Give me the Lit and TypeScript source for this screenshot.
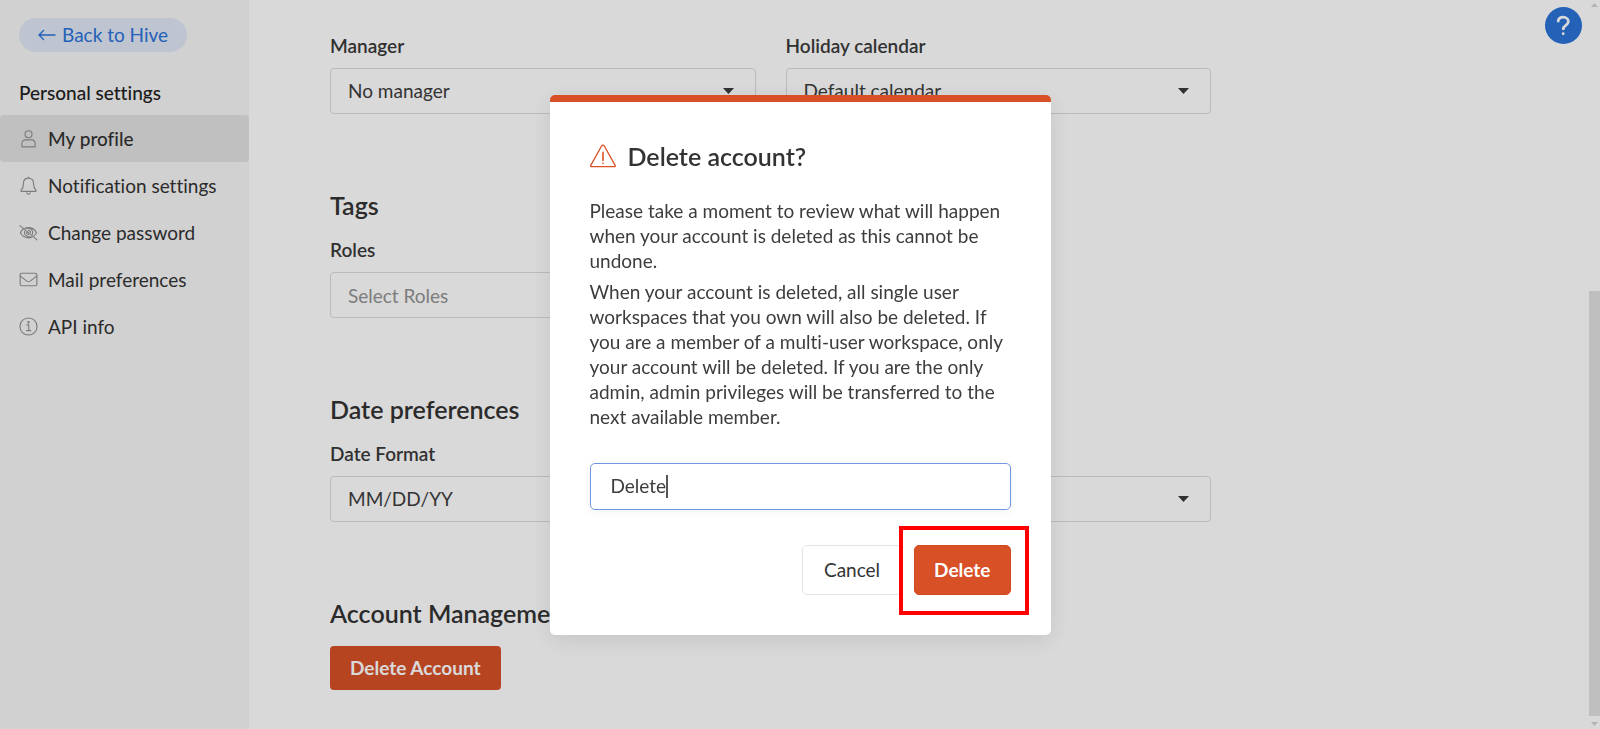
import { LitElement, html, css, svg } from "lit";
import { customElement, property } from "lit/decorators.js";
import { classMap } from "lit/directives/class-map.js";

const navIcons: Record<string, unknown> = {
  user: svg`<circle cx="10" cy="5.500" r="3.700"/><path d="M3 18.300v-2.500c0-2.600 1.400-4.300 3.600-4.300h6.800c2.200 0 3.600 1.700 3.600 4.300v2.500c0 .3-.2.500-.5.500h-13c-.3 0-.5-.2-.5-.5z"/>`,
  bell: svg`<path d="M10 1v1.300M10 2.300c-3.400 0-5.300 2.400-5.300 5.500 0 4.300-1 5.600-2.500 7-.5.500-.2 1.400.5 1.400h14.600c.7 0 1-.9.500-1.400-1.500-1.400-2.500-2.700-2.500-7 0-3.100-1.900-5.500-5.300-5.500zM8.200 17.800c.3.900 1 1.300 1.800 1.300s1.500-.4 1.800-1.300"/>`,
  eye: svg`<path d="M1 2.700l18 15M6.200 5.500C7.400 5 8.700 4.800 10 4.800c3.600 0 6.700 2 8.500 5.400-.6 1.200-1.500 2.200-2.600 3.100M4.300 6.600C3.100 7.500 2.200 8.700 1.500 10.200c1.800 3.400 4.900 5.400 8.500 5.400 1.300 0 2.500-.3 3.600-.7M8 5.900c2.800-1.400 6.400.6 6.400 4.200 0 .6-.1 1.200-.4 1.800M5.800 8.700c-.7 3.500 2.200 6.400 5.700 5.700M9.800 7.800c1.300 0 2.300.9 2.300 2.100M8 9.900c0 1.100.9 2 2 2.100"/>`,
  mail: svg`<rect x="1.200" y="3.400" width="17.600" height="13.200" rx="1.500"/><path d="M1.200 6.200l7 5.500c1.200.9 2.400.9 3.600 0l7-5.500"/>`,
  info: svg`<circle cx="10" cy="10" r="9"/><path d="M8.300 8.300h2v5.900M8 14.400h4.400"/><circle cx="10" cy="5.600" r=".7" fill="currentColor"/>`,
};

@customElement("settings-sidebar")
class SettingsSidebar extends LitElement {
  static styles = css`
    :host {
      display: block;
      background: #f6f6f6;
      padding-top: 18px;
      color: #333;
    }
    .back {
      display: inline-flex;
      align-items: center;
      gap: 6px;
      height: 34px;
      padding: 0 19px;
      margin-left: 19px;
      border-radius: 17px;
      background: #e0e8f5;
      color: #2a72da;
      text-decoration: none;
    }
    .back svg {
      width: 18px;
      height: 12px;
    }
    .title {
      margin: 28px 0 10px 19px;
      font-size: 19px;
      line-height: 25px;
      font-weight: 500;
      color: #222;
    }
    .items {
      list-style: none;
      margin: 0;
      padding: 0;
    }
    .item {
      display: flex;
      align-items: center;
      gap: 10px;
      height: 47px;
      padding-left: 19px;
      border-radius: 4px;
      color: inherit;
      text-decoration: none;
    }
    .item svg {
      width: 19px;
      height: 19px;
      color: #929292;
    }
    .active {
      background: #e2e2e2;
      font-weight: 500;
    }
  `;

  private items = [
    { icon: "user", label: "My profile", active: true },
    { icon: "bell", label: "Notification settings", active: false },
    { icon: "eye", label: "Change password", active: false },
    { icon: "mail", label: "Mail preferences", active: false },
    { icon: "info", label: "API info", active: false },
  ];

  render() {
    return html`
      <a class="back" href="#">
        <svg viewBox="0 0 18 12" fill="none" stroke="currentColor" stroke-width="1.400" stroke-linecap="round" stroke-linejoin="round" aria-hidden="true">
          <path d="M17 6H1M5.500 1.500L1 6l4.500 4.500" />
        </svg>
        Back to Hive
      </a>
      <h2 class="title">Personal settings</h2>
      <ul class="items">
        ${this.items.map(
          (item) => html`<li>
            <a href="#" class=${classMap({ item: true, active: item.active })}>
              <svg viewBox="0 0 20 20" fill="none" stroke="currentColor" stroke-width="1.200" stroke-linecap="round" stroke-linejoin="round" aria-hidden="true">${navIcons[item.icon]}</svg>
              ${item.label}
            </a>
          </li>`
        )}
      </ul>
    `;
  }
}

@customElement("form-field")
class FormField extends LitElement {
  static styles = css`
    :host {
      display: flex;
      flex-direction: column;
      gap: 10px;
    }
    label {
      line-height: 24px;
      font-weight: 600;
      color: #3a3a3a;
    }
    .box {
      display: grid;
      align-items: center;
      height: 46px;
      box-sizing: border-box;
      border: 1px solid #dcdcdc;
      border-radius: 4px;
    }
    .control {
      grid-area: 1 / 1;
      appearance: none;
      width: 100%;
      height: 100%;
      box-sizing: border-box;
      padding: 0 17px;
      border: 0;
      outline: 0;
      background: transparent;
      font: inherit;
      color: #3d3d3d;
    }
    .control::placeholder {
      color: #939393;
      opacity: 1;
    }
    .arrow {
      grid-area: 1 / 1;
      justify-self: end;
      margin-right: 21px;
      width: 11px;
      height: 6px;
      fill: #3a3a3a;
      pointer-events: none;
    }
  `;

  @property() label = "";
  @property() value = "";
  @property() placeholder = "";

  render() {
    return html`
      <label for="control">${this.label}</label>
      <div class="box">
        ${this.placeholder
          ? html`<input id="control" class="control" type="text" placeholder=${this.placeholder} />`
          : html`<select id="control" class="control">
                <option>${this.value}</option>
              </select>
              <svg class="arrow" viewBox="0 0 11 6" aria-hidden="true"><path d="M0 0h11L5.500 6z" /></svg>`}
      </div>
    `;
  }
}

@customElement("delete-dialog")
class DeleteDialog extends LitElement {
  static styles = css`
    :host {
      position: fixed;
      inset: 0;
      display: flex;
      align-items: center;
      justify-content: center;
      background: rgba(0, 0, 0, 0.15);
      color: #333;
    }
    .dialog {
      box-sizing: border-box;
      width: 501px;
      max-width: 100%;
      padding: 42px 40px 40px;
      border-top: 7px solid #d85026;
      border-radius: 5px;
      background: #fff;
      box-shadow: 0 5px 24px rgba(0, 0, 0, 0.1);
    }
    .heading {
      display: flex;
      align-items: center;
      gap: 12px;
      margin: 0 0 30px;
      font-size: 25px;
      line-height: 24px;
      font-weight: 600;
    }
    .heading svg {
      width: 26px;
      height: 24px;
    }
    p {
      margin: 0 0 6px;
      line-height: 25px;
      color: #3d3d3d;
    }
    .confirm {
      display: flex;
      align-items: center;
      height: 47px;
      box-sizing: border-box;
      margin: 34px 0 35px;
      padding: 0 20px;
      border: 1px solid #6f96e0;
      border-radius: 5px;
      box-shadow: 0 2px 8px rgba(0, 0, 0, 0.06);
    }
    .confirm input {
      field-sizing: content;
      padding: 0;
      border: 0;
      outline: 0;
      background: transparent;
      font: inherit;
      color: #3d3d3d;
    }
    .caret {
      width: 2px;
      height: 23px;
      background: #555;
    }
    .actions {
      display: flex;
      justify-content: flex-end;
      gap: 12px;
    }
    button {
      height: 50px;
      padding: 0 21px;
      border: 1px solid #e4e4e4;
      border-radius: 5px;
      background: #fff;
      font: inherit;
      color: #333;
    }
    .danger {
      padding: 0 19px;
      border-color: #d14a20;
      background: #d85026;
      color: #fff;
      font-weight: 700;
    }
    .marked {
      position: relative;
      display: flex;
    }
    .marked::before {
      content: "";
      position: absolute;
      inset: -19px -18px -20px -15px;
      border: 4px solid #f00;
      background: #fff;
    }
    .marked button {
      position: relative;
    }
  `;

  render() {
    return html`
      <section class="dialog" role="dialog" aria-labelledby="title">
        <h2 class="heading" id="title">
          <svg viewBox="0 0 26 24" fill="none" stroke="#dd4f25" stroke-width="1.300" stroke-linecap="round" stroke-linejoin="round" aria-hidden="true">
            <path d="M11.700 1.800L.8 21.400c-.4.700 0 1.300.7 1.300h22.900c.7 0 1.100-.6.700-1.300L14.200 1.800c-.6-1-1.900-1-2.500 0z" />
            <path d="M13 8.300v8.200M13 19.300v.200" stroke-width="1.600" />
          </svg>
          Delete account?
        </h2>
        <p>Please take a moment to review what will happen when your account is deleted as this cannot be undone.</p>
        <p>
          When your account is deleted, all single user workspaces that you own will also be deleted. If you are a
          member of a multi-user workspace, only your account will be deleted. If you are the only admin, admin
          privileges will be transferred to the next available member.
        </p>
        <div class="confirm">
          <input type="text" aria-labelledby="title" value="Delete" /><span class="caret"></span>
        </div>
        <div class="actions">
          <button type="button">Cancel</button>
          <span class="marked"><button type="button" class="danger">Delete</button></span>
        </div>
      </section>
    `;
  }
}

@customElement("app-root")
class AppRoot extends LitElement {
  static styles = css`
    :host {
      display: grid;
      grid-template-columns: 249px 1fr 11px;
      height: 100vh;
      overflow: hidden;
      background: #fff;
      font: 400 19px/24px Lato, "Open Sans", sans-serif;
      font-variant-ligatures: none;
      color: #333;
    }
    main {
      padding: 34px 80px 0 81px;
      max-width: 881px;
      overflow: hidden;
    }
    section {
      margin-bottom: 77px;
    }
    h2 {
      margin: 0 0 19px;
      font-size: 25px;
      line-height: 28px;
      font-weight: 600;
    }
    .row {
      display: grid;
      grid-template-columns: 1fr 1fr;
      gap: 30px;
    }
    .danger {
      height: 44px;
      padding: 0 20px;
      border: 0;
      border-radius: 4px;
      background: #d85026;
      font: inherit;
      font-weight: 700;
      color: #fff;
    }
    .help {
      position: fixed;
      top: 7px;
      right: 18px;
      width: 37px;
      height: 37px;
      padding: 0;
      border: 0;
      border-radius: 50%;
      background: #2b74d9;
      color: #fff;
    }
    .help svg {
      display: block;
      width: 37px;
      height: 37px;
    }
    .scroll {
      display: flex;
      flex-direction: column;
      align-items: center;
    }
    .up,
    .down {
      width: 7px;
      height: 13px;
      fill: #d4d4d4;
    }
    .track {
      flex: 278;
    }
    .thumb {
      flex: 425;
      width: 100%;
      background: #e1e1e1;
    }
  `;

  render() {
    return html`
      <settings-sidebar></settings-sidebar>
      <main>
        <section class="row">
          <form-field label="Manager" value="No manager"></form-field>
          <form-field label="Holiday calendar" value="Default calendar"></form-field>
        </section>
        <section>
          <h2>Tags</h2>
          <div class="row">
            <form-field label="Roles" placeholder="Select Roles"></form-field>
          </div>
        </section>
        <section>
          <h2>Date preferences</h2>
          <div class="row">
            <form-field label="Date Format" value="MM/DD/YY"></form-field>
            <form-field label="First day" value="Sunday"></form-field>
          </div>
        </section>
        <section>
          <h2>Account Management</h2>
          <button type="button" class="danger">Delete Account</button>
        </section>
      </main>
      <div class="scroll" aria-hidden="true">
        <svg class="up" viewBox="0 0 7 13"><path d="M0 7l3.500-4L7 7z" /></svg>
        <div class="track"></div>
        <div class="thumb"></div>
        <svg class="down" viewBox="0 0 7 13"><path d="M0 6l3.500 4L7 6z" /></svg>
      </div>
      <button type="button" class="help" aria-label="Help">
        <svg viewBox="0 0 38 38" fill="none" stroke="currentColor" stroke-width="2.800" stroke-linecap="round" stroke-linejoin="round">
          <path d="M13.500 14.500c.5-2.600 2.500-4 5.200-4 3 0 5.300 1.800 5.300 4.500 0 3.900-5.200 3.700-5.200 7.500M18.700 27.300v.200" />
        </svg>
      </button>
      <delete-dialog></delete-dialog>
    `;
  }
}
